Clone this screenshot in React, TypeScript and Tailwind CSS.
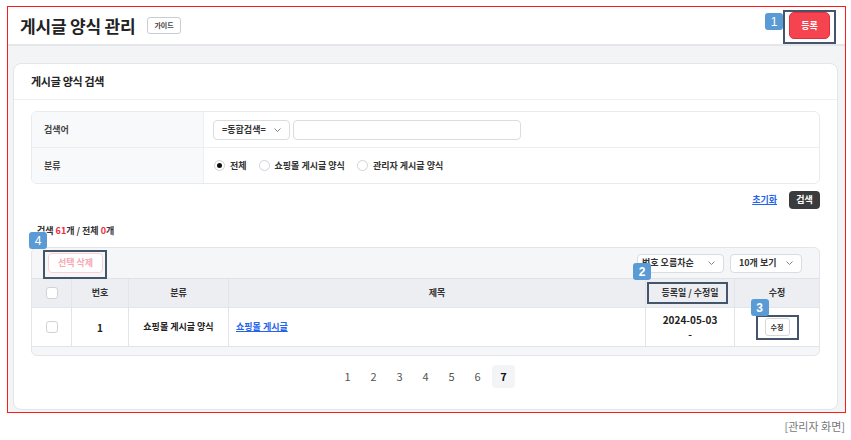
import { ReactNode } from 'react'

const font = "font-['Noto_Sans_CJK_KR','Noto_Sans',sans-serif]"

function Badge({ n, className }: { n: string; className: string }) {
  return (
    <span
      className={`absolute flex h-[17px] w-[18px] items-center justify-center rounded-[3px] bg-[#5b9bd5] text-[12px] leading-none text-white font-['Liberation_Sans',sans-serif] ${className}`}
    >
      {n}
    </span>
  )
}

function Chevron() {
  return (
    <svg width="7" height="4" viewBox="0 0 7 4" className="shrink-0">
      <path d="M0.5 0.5 L3.5 3.5 L6.5 0.5" fill="none" stroke="#777" strokeWidth="0.9" />
    </svg>
  )
}

function Radio({ checked, label }: { checked?: boolean; label: string }) {
  return (
    <label className="flex items-center gap-[5px]">
      <span className="flex h-[11px] w-[11px] items-center justify-center rounded-full border border-[#cfd3d8] bg-white">
        {checked && <span className="h-[5px] w-[5px] rounded-full bg-[#111]" />}
      </span>
      <span className="text-[9px] font-semibold text-[#333]">{label}</span>
    </label>
  )
}

function Checkbox() {
  return <span className="block h-[12px] w-[12px] rounded-[3px] border border-[#cfd3d8] bg-white" />
}

function Cell({ children, className = '' }: { children?: ReactNode; className?: string }) {
  return <div className={`flex items-center justify-center border-r border-[#e1e4e8] ${className}`}>{children}</div>
}

export default function App() {
  const pages = ['1', '2', '3', '4', '5', '6', '7']

  return (
    <div className={`h-[440px] w-[851px] overflow-hidden bg-white pl-[7px] pt-[6px] ${font}`}>
      <div className="flex h-[407px] w-[839px] flex-col overflow-hidden border border-[#ff1a1a] bg-[#f3f4f6]">
        {/* page header */}
        <header className="flex h-[39px] shrink-0 items-center justify-between border-b-2 border-[#e4e6ea] bg-white pl-[12px] pr-[15px]">
          <div className="flex items-center gap-[12px]">
            <h1 className="text-[17px] font-bold tracking-[-0.2px] text-[#222]">게시글 양식 관리</h1>
            <span className="flex h-[17px] items-center rounded-[3px] border border-[#c9cdd2] px-[6px] text-[7px] font-bold text-[#444]">
              가이드
            </span>
          </div>
          <div className="relative">
            <button className="flex h-[27px] w-[41px] items-center justify-center rounded-[5px] border border-[#e0303d] bg-[#f5444f] text-[9px] font-bold text-white">
              등록
            </button>
            <span className="absolute -bottom-[5px] -left-[6px] -right-[6px] -top-[2px] border-2 border-[#44546a]" />
            <Badge n="1" className="-left-[24px] top-[1px]" />
          </div>
        </header>

        {/* search card */}
        <section className="mb-[2px] ml-[5px] mr-[7px] mt-[17px] flex flex-1 flex-col rounded-[8px] border border-[#e3e5e8] bg-white">
          <div className="flex h-[36px] shrink-0 items-center border-b border-[#eef0f2] px-[17px]">
            <h2 className="text-[11px] font-bold tracking-[-0.3px] text-[#222]">게시글 양식 검색</h2>
          </div>

          <div className="px-[17px] pt-[11px]">
            <div className="overflow-hidden rounded-[6px] border border-[#e8eaed]">
              <div className="grid h-[36px] grid-cols-[172px_1fr] border-b border-[#eceef0]">
                <div className="flex items-center border-r border-[#eceef0] bg-[#f8f9fa] pl-[12px] text-[9px] font-semibold text-[#444]">
                  검색어
                </div>
                <div className="flex items-center gap-[3px] pl-[9px]">
                  <div className="flex h-[20px] w-[77px] items-center justify-between rounded-[4px] border border-[#d9dce0] pl-[8px] pr-[8px] text-[9px] font-semibold text-[#333]">
                    =동합검색=
                    <Chevron />
                  </div>
                  <div className="h-[20px] w-[228px] rounded-[4px] border border-[#d9dce0]" />
                </div>
              </div>
              <div className="grid h-[35px] grid-cols-[172px_1fr]">
                <div className="flex items-center border-r border-[#eceef0] bg-[#f8f9fa] pl-[12px] text-[9px] font-semibold text-[#444]">
                  분류
                </div>
                <div className="flex items-center gap-[12px] pl-[10px]">
                  <Radio checked label="전체" />
                  <Radio label="쇼핑몰 게시글 양식" />
                  <Radio label="관리자 게시글 양식" />
                </div>
              </div>
            </div>

            <div className="mt-[7px] flex items-center justify-end gap-[12px]">
              <a className="text-[9px] font-bold text-[#2563eb] underline">초기화</a>
              <button className="flex h-[18px] w-[31px] items-center justify-center rounded-[4px] bg-[#3a3b3d] text-[9px] font-bold text-white">
                검색
              </button>
            </div>

            <p className="mt-[16px] pl-[6px] text-[9px] leading-[12px] font-semibold text-[#333]">
              검색 <span className="text-[#ef2b3a]">61</span>개 / 전체 <span className="text-[#ef2b3a]">0</span>개
            </p>

            {/* result list */}
            <div className="relative mt-[10px] rounded-[6px] border border-[#e3e5e8] bg-[#f5f6f8] pb-[8px]">
              <Badge n="4" className="-left-[3px] -top-[16px]" />
              <div className="flex h-[30px] items-center justify-between pl-[16px] pr-[17px]">
                <div className="relative">
                  <button className="flex h-[20px] w-[55px] items-center justify-center rounded-[4px] border border-[#fbd0d5] bg-white text-[9px] font-bold text-[#f7a9b3]">
                    선택 삭제
                  </button>
                  <span className="absolute -bottom-[6px] -left-[5px] -right-[4px] -top-[3px] border-2 border-[#44546a]" />
                </div>
                <div className="flex items-center gap-[6px]">
                  <div className="flex h-[19px] w-[87px] items-center justify-between rounded-[4px] border border-[#d9dce0] bg-white pl-[4px] pr-[8px] text-[9px] font-semibold text-[#333]">
                    번호 오름차순
                    <Chevron />
                  </div>
                  <div className="flex h-[19px] w-[72px] items-center justify-between rounded-[4px] border border-[#d9dce0] bg-white pl-[8px] pr-[8px] text-[9px] font-semibold text-[#333]">
                    10개 보기
                    <Chevron />
                  </div>
                </div>
              </div>

              <div className="grid h-[29px] grid-cols-[40px_57px_100px_1fr_89px_84px] border-t border-[#dfe2e6] bg-[#eceef1] text-[9px] font-semibold text-[#333]">
                <Cell>
                  <Checkbox />
                </Cell>
                <Cell>번호</Cell>
                <Cell>분류</Cell>
                <Cell>제목</Cell>
                <Cell className="relative">
                  등록일 / 수정일
                  <span className="absolute left-[1px] top-[3px] h-[22px] w-[81px] border-2 border-[#44546a]" />
                  <Badge n="2" className="-left-[13px] -top-[16px]" />
                </Cell>
                <Cell className="border-r-0">수정</Cell>
              </div>

              <div className="grid h-[40px] grid-cols-[40px_57px_100px_1fr_89px_84px] border-y border-[#e1e4e8] bg-white text-[9px] font-bold text-[#222]">
                <Cell>
                  <Checkbox />
                </Cell>
                <Cell className="text-[10px]">1</Cell>
                <Cell>쇼핑몰 게시글 양식</Cell>
                <Cell className="justify-start pl-[7px]">
                  <a className="text-[#2563eb] underline">쇼핑몰 게시글</a>
                </Cell>
                <Cell className="flex-col text-[10px] font-semibold leading-[14px]">
                  <span>2024-05-03</span>
                  <span>-</span>
                </Cell>
                <Cell className="border-r-0">
                  <div className="relative">
                    <button className="flex h-[18px] w-[25px] items-center justify-center rounded-[3px] border border-[#d4d7db] bg-white text-[7px] font-bold text-[#333]">
                      수정
                    </button>
                    <span className="absolute -bottom-[4px] -left-[9px] -right-[9px] -top-[3px] border-2 border-[#44546a]" />
                    <Badge n="3" className="-left-[14px] -top-[19px]" />
                  </div>
                </Cell>
              </div>
            </div>

            <nav className="mt-[9px] flex justify-center gap-[3px]">
              {pages.map((p) => (
                <span
                  key={p}
                  className={
                    p === '7'
                      ? 'flex h-[23px] w-[23px] items-center justify-center rounded-[4px] bg-[#f3f4f6] text-[11px] font-bold text-[#111]'
                      : 'flex h-[23px] w-[23px] items-center justify-center text-[11px] text-[#555]'
                  }
                >
                  {p}
                </span>
              ))}
            </nav>
          </div>
        </section>
      </div>
      <p className="mt-[5px] pr-[6px] text-right text-[11px] text-[#777]">[관리자 화면]</p>
    </div>
  )
}
